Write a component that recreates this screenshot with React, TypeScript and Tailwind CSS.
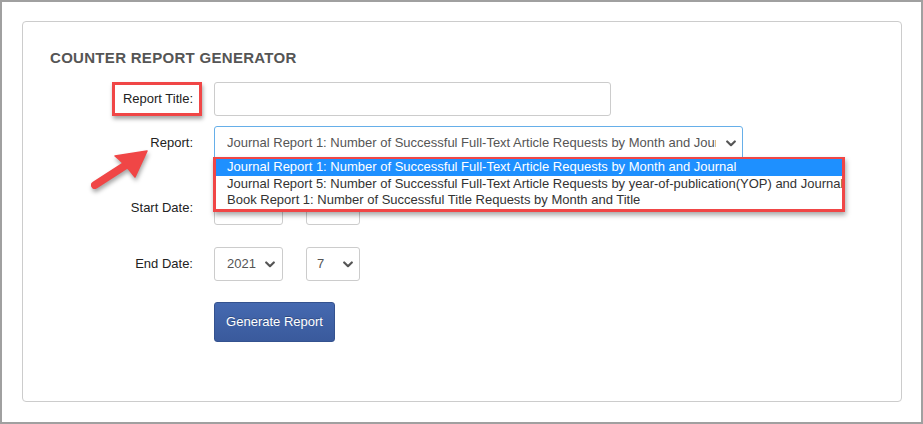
import React from "react";

const font = { fontFamily: '"Liberation Sans", Arial, sans-serif' };

function Chevron() {
  return (
    <svg width="10" height="7" viewBox="0 0 10 7" className="shrink-0">
      <path d="M1.2 1.5 L5 5.2 L8.8 1.5" fill="none" stroke="#555" strokeWidth="2.2" strokeLinecap="round" strokeLinejoin="round" />
    </svg>
  );
}

function SmallSelect({ value, width, padL, padR }: { value: string; width: string; padL: string; padR: string }) {
  return (
    <div className={`flex h-[34px] items-center justify-between rounded-[3px] border border-[#cccccc] bg-white text-[13px] text-[#555] ${width} ${padL} ${padR}`}>
      <span>{value}</span>
      <Chevron />
    </div>
  );
}

export default function App() {
  return (
    <div className="relative box-border h-[424px] w-[923px] border-2 border-[#a0a0a0] bg-white pl-[20px] pt-[19px]" style={font}>
      <div className="box-border h-[381px] w-[880px] rounded-[4px] border border-[#cccccc] bg-white pl-[27px] pt-[27px]">
        <div className="text-[15px] font-bold leading-[17px] tracking-[0.3px] text-[#555555]">COUNTER REPORT GENERATOR</div>

        <div className="-ml-[27px] mt-[16px] flex flex-col">
          {/* Report Title */}
          <div className="flex h-[34px] items-center">
            <div className="relative flex h-full w-[170px] items-center justify-end text-[13px] text-[#222]">
              <span>Report Title:</span>
              <div className="absolute left-[89px] top-0 h-[34px] w-[90px] border-[3px] border-[#f04646] shadow-[1px_3px_4px_rgba(0,0,0,0.35)]"></div>
            </div>
            <div className="ml-[21px] h-[34px] w-[397px] rounded-[3px] border border-[#cccccc] bg-white"></div>
          </div>

          {/* Report */}
          <div className="mt-[10px] flex h-[34px] items-center">
            <div className="flex w-[170px] justify-end text-[13px] text-[#222]">Report:</div>
            <div className="relative ml-[21px]">
              <div className="flex h-[34px] w-[529px] items-center rounded-[3px] border border-[#66afe9] bg-white pl-[12px] pr-[6px] text-[13px] text-[#555]">
                <div className="w-[489px] overflow-hidden whitespace-nowrap">
                  Journal Report 1: Number of Successful Full-Text Article Requests by Month and Journal
                </div>
                <div className="ml-auto">
                  <Chevron />
                </div>
              </div>
              <div className="absolute left-[-1px] top-[31px] z-10 box-border flex h-[55px] w-[632px] flex-col border-[3px] border-t-[2px] border-[#f04646] bg-white text-[13px] leading-[16.5px] text-[#333] shadow-[1px_3px_5px_rgba(0,0,0,0.35)]">
                <div className="whitespace-nowrap bg-[#1e90ff] pl-[11px] text-white">Journal Report 1: Number of Successful Full-Text Article Requests by Month and Journal</div>
                <div className="overflow-hidden whitespace-nowrap pl-[11px]">Journal Report 5: Number of Successful Full-Text Article Requests by year-of-publication(YOP) and Journal</div>
                <div className="whitespace-nowrap pl-[11px]">Book Report 1: Number of Successful Title Requests by Month and Title</div>
              </div>
            </div>
          </div>

          {/* Start Date */}
          <div className="mt-[31px] flex h-[34px] items-center">
            <div className="flex w-[170px] justify-end text-[13px] text-[#222]">Start Date:</div>
            <div className="ml-[21px] flex gap-[23px]">
              <div className="h-[34px] w-[69px] rounded-[3px] border border-[#cccccc] bg-white"></div>
              <div className="h-[34px] w-[54px] rounded-[3px] border border-[#cccccc] bg-white"></div>
            </div>
          </div>

          {/* End Date */}
          <div className="mt-[22px] flex h-[34px] items-center">
            <div className="flex w-[170px] justify-end text-[13px] text-[#222]">End Date:</div>
            <div className="ml-[21px] flex gap-[23px]">
              <SmallSelect value="2021" width="w-[69px]" padL="pl-[12px]" padR="pr-[7px]" />
              <SmallSelect value="7" width="w-[54px]" padL="pl-[10px]" padR="pr-[6px]" />
            </div>
          </div>

          {/* Button */}
          <div className="mt-[21px] flex">
            <div className="w-[170px]"></div>
            <button className="ml-[21px] h-[40px] w-[121px] rounded-[3px] border border-[#34528f] bg-gradient-to-b from-[#4569b0] to-[#3a5a9c] text-[13px] text-white [text-shadow:0_-1px_0_rgba(0,0,0,0.25)]">
              Generate Report
            </button>
          </div>
        </div>
      </div>

      {/* annotation arrow */}
      <svg className="pointer-events-none absolute left-0 top-0 drop-shadow-[1px_3px_2px_rgba(0,0,0,0.35)]" width="923" height="424" viewBox="0 0 923 424">
        <line x1="93" y1="183" x2="124" y2="163" stroke="#f04646" strokeWidth="8" strokeLinecap="round" />
        <path d="M145 149 L113 154 Q122 161 133 175 Z" fill="#f04646" stroke="#f04646" strokeWidth="1.5" strokeLinejoin="round" />
      </svg>
    </div>
  );
}
